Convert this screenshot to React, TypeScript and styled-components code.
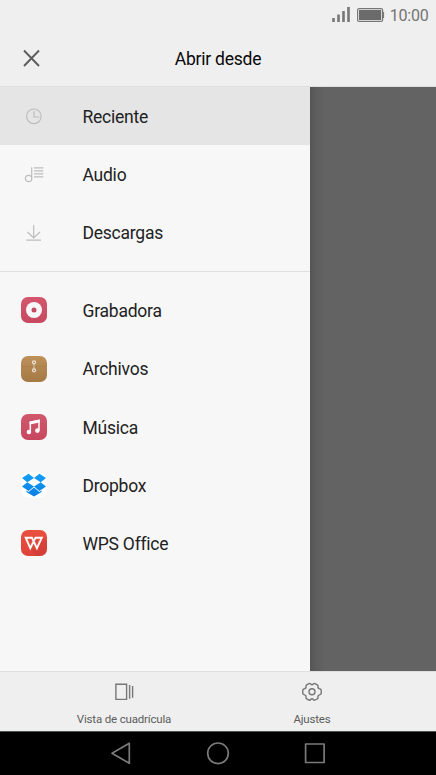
import React from "react";
import styled, { createGlobalStyle } from "styled-components";

const GlobalStyle = createGlobalStyle`
  * { box-sizing: border-box; }
  body { margin: 0; background: #000; font-family: Roboto, "Liberation Sans", sans-serif; font-variant-ligatures: none; }
`;

const Screen = styled.div`
  width: 436px;
  height: 775px;
  display: flex;
  flex-direction: column;
  overflow: hidden;
  background: #efefef;
`;

const StatusBar = styled.div`
  height: 30px;
  flex: none;
  display: flex;
  justify-content: flex-end;
  align-items: center;
  padding-right: 7.4px;
  color: #747474;
  font-size: 16px;
  letter-spacing: -0.2px;
  line-height: 30px;
`;

const StatusIcons = styled.svg`
  width: 58px;
  height: 30px;
  flex: none;
`;

const Clock = styled.span`
  width: 40px;
  text-align: right;
  white-space: nowrap;
  padding-top: 1px;
`;

const Header = styled.header`
  height: 57px;
  flex: none;
  display: grid;
  grid-template-columns: 60px 1fr 60px;
  align-items: center;
  border-bottom: 1px solid #dedede;
`;

const CloseButton = styled.button`
  width: 60px;
  height: 56px;
  border: 0;
  padding: 0;
  background: none;
  svg { display: block; }
`;

const Title = styled.h1`
  margin: 0;
  padding-top: 2px;
  text-align: center;
  color: #080808;
  font-size: 17.5px;
  letter-spacing: -0.23px;
  font-weight: 400;
  line-height: 54px;
`;

const Body = styled.main`
  height: 584px;
  flex: none;
  display: flex;
`;

const Drawer = styled.nav`
  width: 310px;
  background: #f7f7f7;
`;

const Scrim = styled.div`
  flex: 1;
  background: linear-gradient(90deg, #555 0, #5d5d5d 6px, #636363 14px);
`;

const Item = styled.div<{ $active?: boolean }>`
  height: 58.15px;
  display: flex;
  align-items: center;
  gap: 35.5px;
  padding-left: 21px;
  background: ${(p) => (p.$active ? "#e5e5e5" : "transparent")};
  color: #222;
  font-size: 17.5px;
  letter-spacing: -0.24px;
`;

const Label = styled.span`
  padding-top: 1.6px;
`;

const Glyph = styled.svg`
  width: 26px;
  height: 26px;
  flex: none;
  overflow: visible;
`;

const LineGlyph = styled(Glyph)`
  fill: none;
  stroke: #bdbdbd;
  stroke-width: 1.2;
`;

const Divider = styled.div`
  height: 1px;
  margin: 9.6px 0 9.4px;
  background: #e0e0e0;
`;

const Toolbar = styled.footer`
  height: 61px;
  flex: none;
  display: flex;
  justify-content: center;
  border-top: 1px solid #dfdfdf;
  border-bottom: 1px solid #4c5350;
`;

const Tool = styled.button`
  width: 188px;
  display: flex;
  flex-direction: column;
  align-items: center;
  padding: 8px 0 0;
  border: 0;
  background: none;
  color: #5c5c5c;
  font-family: inherit;
  font-size: 11.5px;
  letter-spacing: -0.17px;
  line-height: 14px;
  gap: 8px;
  svg { width: 24px; height: 24px; fill: none; stroke: #777; stroke-width: 1.4; }
`;

const SystemNav = styled.div`
  flex: 1;
  display: flex;
  justify-content: center;
  align-items: center;
  gap: 73px;
  padding-bottom: 1px;
  background: #000;
  svg { width: 24px; height: 24px; fill: none; stroke: #7a7a7a; stroke-width: 1.7; stroke-linejoin: round; }
`;

const Tile = ({ fill, id, to }: { fill: string; to: string; id: string }) => (
  <>
    <defs>
      <linearGradient id={id} x1="0" y1="0" x2="0" y2="1">
        <stop stopColor={fill} />
        <stop offset="1" stopColor={to} />
      </linearGradient>
    </defs>
    <rect width="26" height="26" rx="7" fill={`url(#${id})`} />
  </>
);

const RecentIcon = () => (
  <LineGlyph>
    <circle cx="12.9" cy="13.3" r="7.3" />
    <path d="M13 8.3V14H18.3" />
  </LineGlyph>
);

const AudioIcon = () => (
  <LineGlyph>
    <circle cx="7.6" cy="17.5" r="3.2" />
    <path d="M10.7 6.3V17.5M13 6.8H22.3M13 9.8H22.3M13 12.8H22.3M13 15.8H22.3" />
  </LineGlyph>
);

const DownloadIcon = () => (
  <LineGlyph>
    <path d="M12.7 6V19M6.5 13L12.7 19L19 13M5.3 21.2H20" />
  </LineGlyph>
);

const RecorderIcon = () => (
  <Glyph>
    <Tile id="recorder" fill="#d4566c" to="#c74960" />
    <circle cx="13" cy="13" r="8" fill="#f7f7fa" />
    <circle cx="13" cy="13" r="2.5" fill="#c94a62" />
  </Glyph>
);

const FilesIcon = () => (
  <Glyph>
    <Tile id="files" fill="#bd9158" to="#a47945" />
    <path d="M0 10.5H26" stroke="#a67b46" strokeWidth=".6" />
    <path d="M13 7V14.5" stroke="#c0b5a4" strokeWidth="1.4" />
    <g fill="#a67b46" stroke="#f0e8dc" strokeWidth="1.2">
      <circle cx="13" cy="6.3" r="1.5" />
      <circle cx="13" cy="14.3" r="1.5" />
    </g>
  </Glyph>
);

const MusicIcon = () => (
  <Glyph>
    <Tile id="music" fill="#d0596c" to="#c8475f" />
    <path d="M9.3 17.5V8.2L18 6.4V16" fill="none" stroke="#fff" strokeWidth="1.5" />
    <path d="M8.6 7.7L18.7 5.6V8.5L8.6 10.6Z" fill="#fff" />
    <circle cx="7.9" cy="18" r="2.3" fill="#fff" />
    <circle cx="16.4" cy="16.6" r="2.3" fill="#fff" />
  </Glyph>
);

const DropboxIcon = () => (
  <Glyph>
    <defs>
      <linearGradient id="box" x1="0" y1="1" x2="0" y2="25" gradientUnits="userSpaceOnUse">
        <stop stopColor="#14a0f8" />
        <stop offset="1" stopColor="#087de4" />
      </linearGradient>
    </defs>
    <rect x=".5" y=".5" width="25" height="25" rx="7" fill="#fff" />
    <path
      fill="url(#box)"
      d="M7.6 1.7L13 6.1L6.3 10.3L1 6.1ZM18.4 1.7L25 6.1L19.7 10.3L13 6.1ZM6.3 10.3L13 14.4L7.6 18.9L1 14.5ZM19.7 10.3L25 14.5L18.4 18.9L13 14.4ZM13 15.6L18.4 20L20.6 18.6V20.1L13 24.6L5.4 20.1V18.6L7.6 20Z"
    />
  </Glyph>
);

const WpsIcon = () => (
  <Glyph>
    <Tile id="wps" fill="#e9503f" to="#de4239" />
    <path d="M16 19L21.8 7.5L25.9 12V19Q25.9 25.9 19 25.9H15L9 19Z" fill="#bd3330" opacity=".3" />
    <path
      d="M9.3 18.2L4.7 7.7H10.9L15.9 18.2L20.8 7.7H14.5Z"
      fill="none"
      stroke="#fff"
      strokeWidth="1.9"
    />
  </Glyph>
);

const sources = [
  { label: "Reciente", Icon: RecentIcon, active: true },
  { label: "Audio", Icon: AudioIcon },
  { label: "Descargas", Icon: DownloadIcon },
];

const apps = [
  { label: "Grabadora", Icon: RecorderIcon },
  { label: "Archivos", Icon: FilesIcon },
  { label: "Música", Icon: MusicIcon },
  { label: "Dropbox", Icon: DropboxIcon },
  { label: "WPS Office", Icon: WpsIcon },
];

export default function App() {
  return (
    <>
      <GlobalStyle />
      <Screen>
        <StatusBar>
          <StatusIcons viewBox="331 0 58 30">
            <path
              d="M333.5 18V22M338.5 14.5V22M343.5 11V22M348.5 7V22"
              stroke="#777"
              strokeWidth="2.6"
            />
            <rect x="357.6" y="8.6" width="25" height="12.8" rx="1.5" fill="#efefef" stroke="#777" strokeWidth="1.2" />
            <rect x="359" y="10" width="22.2" height="10" fill="#6b6b6b" />
            <path d="M383.3 12V18" stroke="#777" strokeWidth="1.6" />
          </StatusIcons>
          <Clock>10:00</Clock>
        </StatusBar>
        <Header>
          <CloseButton aria-label="Cerrar">
            <svg width="60" height="56" fill="none" stroke="#5c5c5c" strokeWidth="1.9">
              <path d="M24 20.5L39 36M39 20.5L24 36" />
            </svg>
          </CloseButton>
          <Title>Abrir desde</Title>
        </Header>
        <Body>
          <Drawer>
            {sources.map(({ label, Icon, active }) => (
              <Item key={label} $active={active}>
                <Icon />
                <Label>{label}</Label>
              </Item>
            ))}
            <Divider />
            {apps.map(({ label, Icon }) => (
              <Item key={label}>
                <Icon />
                <Label>{label}</Label>
              </Item>
            ))}
          </Drawer>
          <Scrim />
        </Body>
        <Toolbar>
          <Tool>
            <svg viewBox="0 0 24 24">
              <path d="M3.9 4.2H14.6V19.4H3.9ZM17.6 5V18.8M20.6 6V17.8" />
            </svg>
            Vista de cuadrícula
          </Tool>
          <Tool>
            <svg viewBox="0 0 24 24">
              <path d="M9 3.6Q10 3.1 10.7 4.1Q12 5.4 13.3 4.1Q14 3.1 15 3.6L17.3 4.8Q18.3 5.4 18 6.5Q17.7 8.3 19.5 8.7Q21.2 9 21.2 10.3V13.3Q21.2 14.6 19.5 14.9Q17.7 15.3 18 17.1Q18.3 18.2 17.3 18.8L15 20Q14 20.5 13.3 19.5Q12 18.2 10.7 19.5Q10 20.5 9 20L6.7 18.8Q5.7 18.2 6 17.1Q6.3 15.3 4.5 14.9Q2.8 14.6 2.8 13.3V10.3Q2.8 9 4.5 8.7Q6.3 8.3 6 6.5Q5.7 5.4 6.7 4.8Z" />
              <circle cx="12" cy="11.8" r="3" />
            </svg>
            Ajustes
          </Tool>
        </Toolbar>
        <SystemNav>
          <svg viewBox="0 0 24 24"><path d="M20.3 2.3V22.2L3 12.3Z" /></svg>
          <svg viewBox="0 0 24 24"><circle cx="12" cy="12.3" r="10.3" /></svg>
          <svg viewBox="0 0 24 24"><rect x="2.6" y="3" width="18.5" height="18.5" /></svg>
        </SystemNav>
      </Screen>
    </>
  );
}
